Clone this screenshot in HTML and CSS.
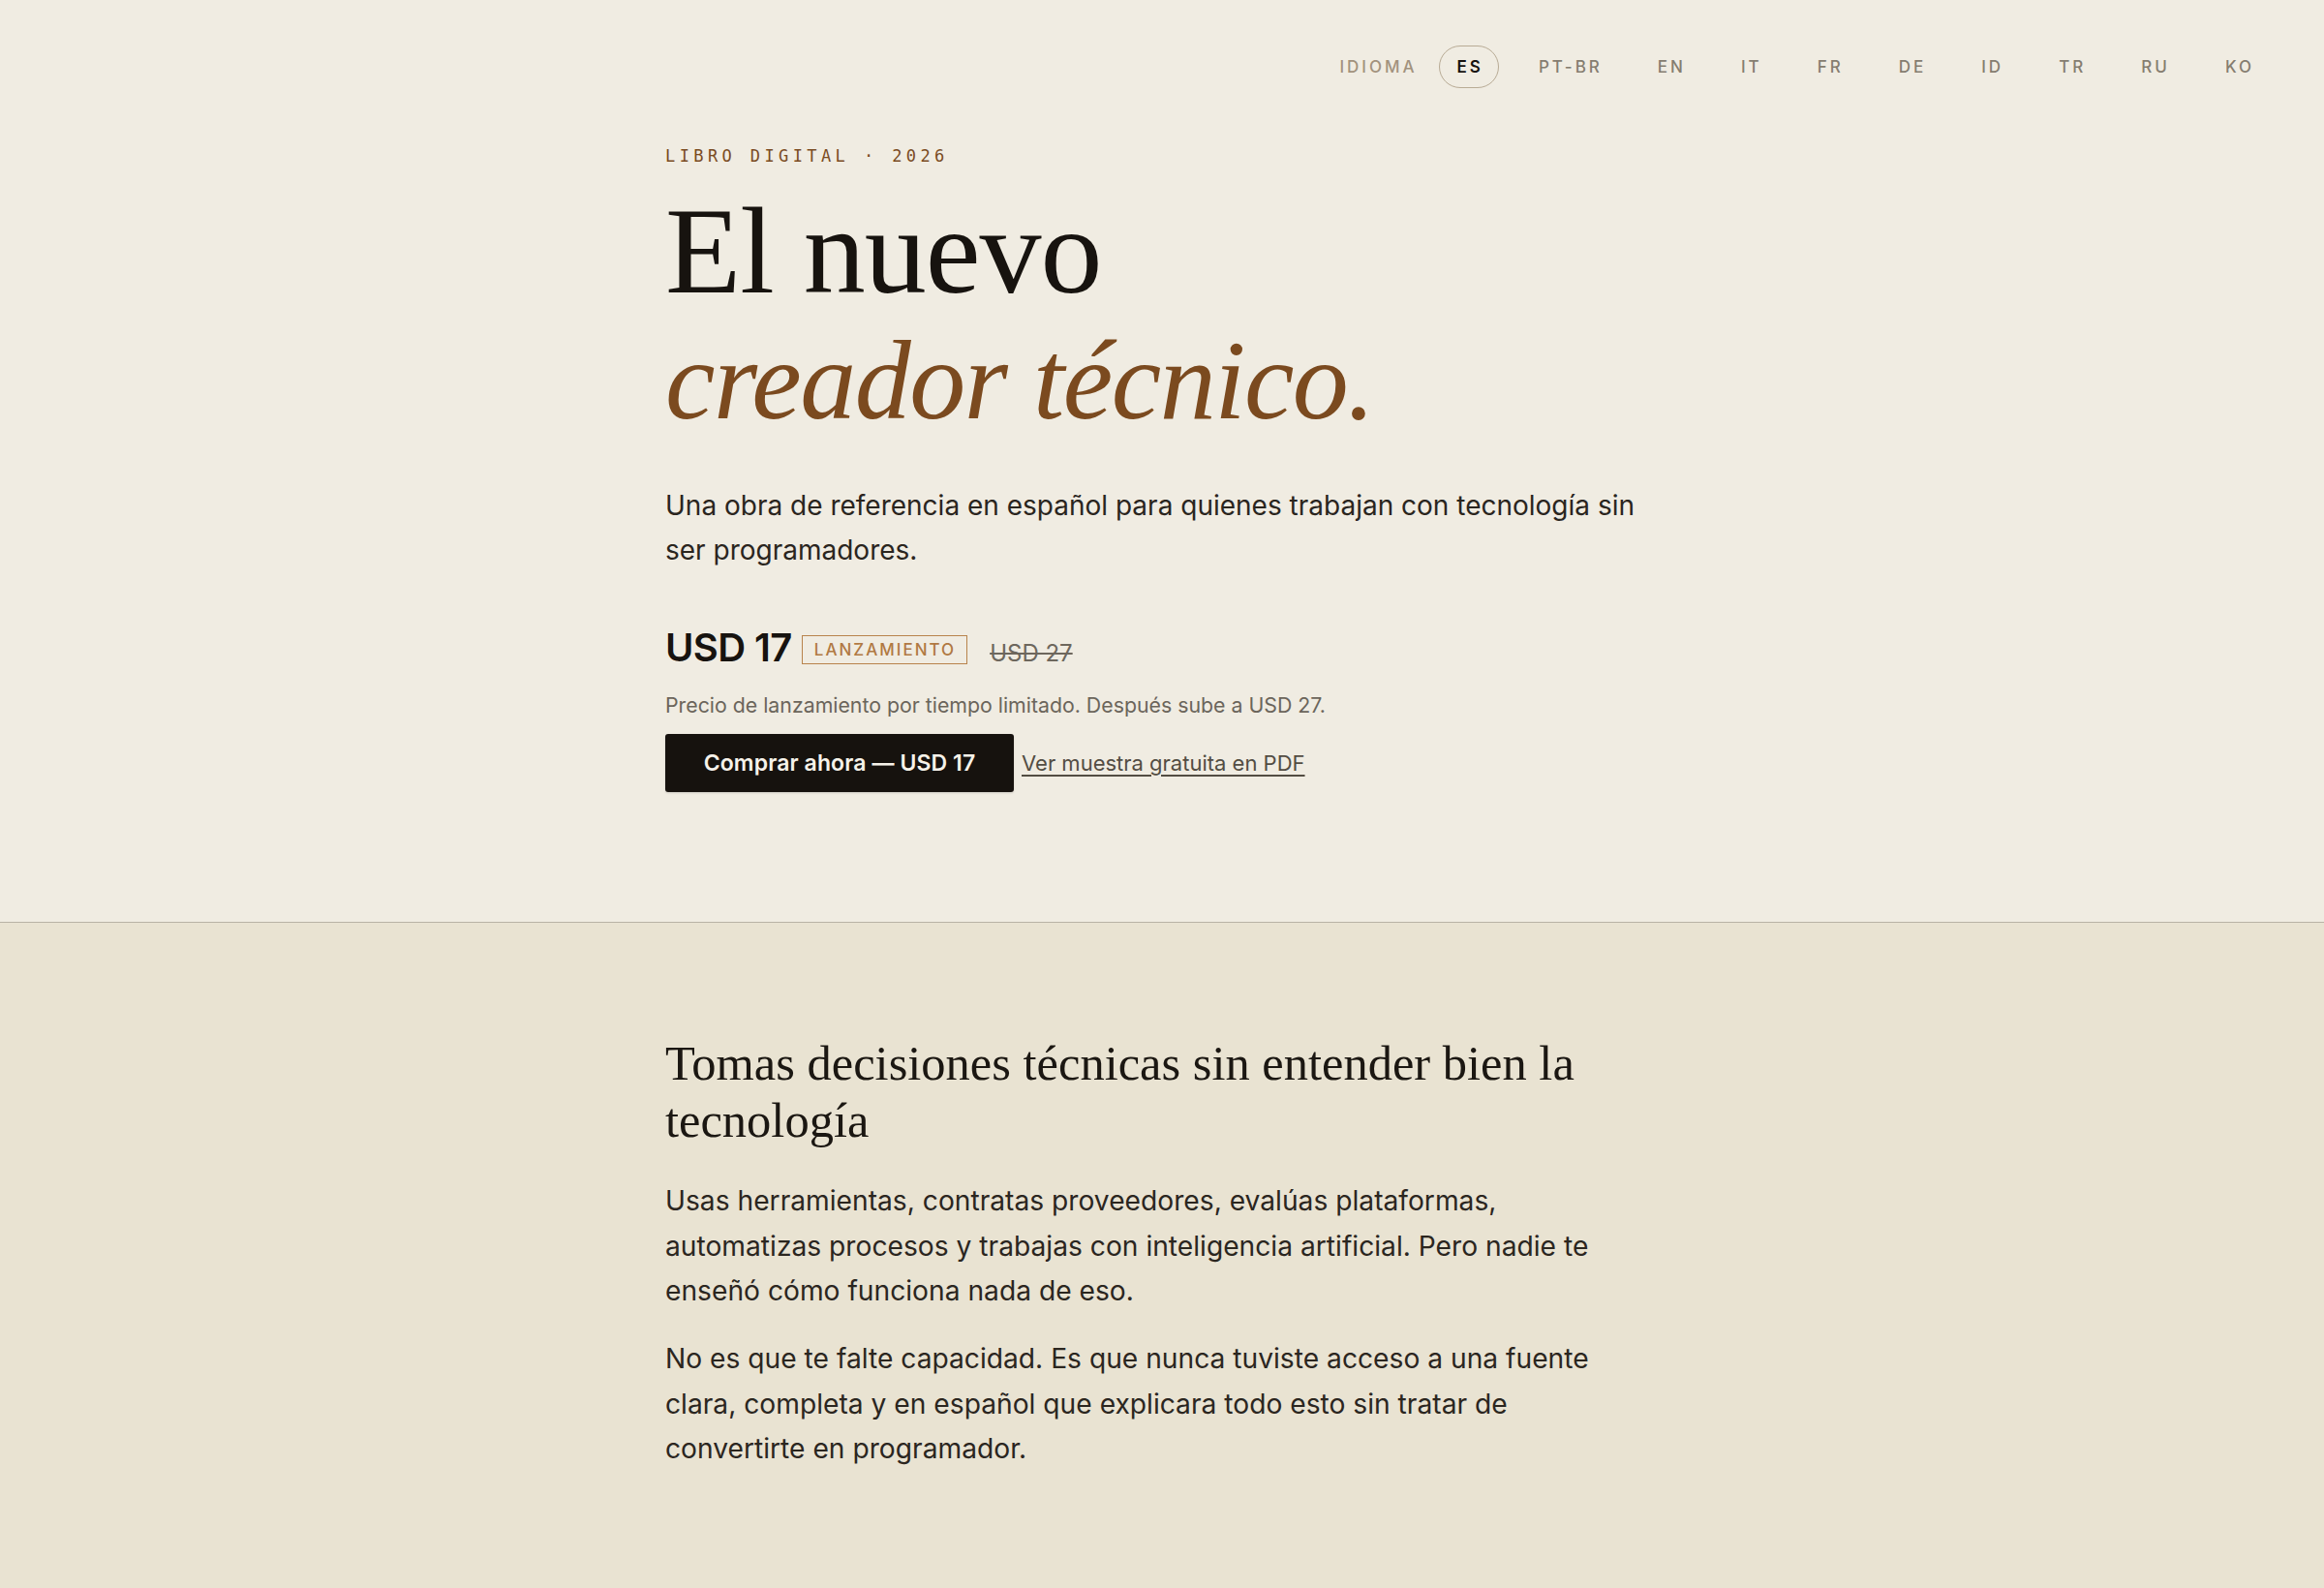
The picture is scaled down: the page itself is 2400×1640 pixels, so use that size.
FILE: index.html
```html
<!DOCTYPE html>
<html lang="es">
<head>
<meta charset="utf-8">
<title>El nuevo creador técnico</title>
<link rel="stylesheet" href="styles.css">
</head>
<body>
<header class="topbar">
  <nav class="lang-nav">
    <span class="lang-label">IDIOMA</span>
    <a class="lang lang-active" href="#">ES</a>
    <a class="lang" href="#">PT-BR</a>
    <a class="lang" href="#">EN</a>
    <a class="lang" href="#">IT</a>
    <a class="lang" href="#">FR</a>
    <a class="lang" href="#">DE</a>
    <a class="lang" href="#">ID</a>
    <a class="lang" href="#">TR</a>
    <a class="lang" href="#">RU</a>
    <a class="lang" href="#">KO</a>
  </nav>
</header>

<section class="hero">
  <div class="container">
    <p class="eyebrow">LIBRO DIGITAL · 2026</p>
    <h1 class="title">
      <span class="title-line">El nuevo</span>
      <span class="title-line title-italic">creador técnico.</span>
    </h1>
    <p class="lede">Una obra de referencia en español para quienes trabajan con tecnología sin ser programadores.</p>
    <div class="price-row">
      <span class="price">USD 17</span>
      <span class="badge">LANZAMIENTO</span>
      <span class="old-price">USD 27</span>
    </div>
    <p class="price-note">Precio de lanzamiento por tiempo limitado. Después sube a USD 27.</p>
    <div class="cta-row">
      <a class="btn-buy" href="#">Comprar ahora — USD 17</a>
      <a class="sample-link" href="#">Ver muestra gratuita en PDF</a>
    </div>
  </div>
</section>

<section class="problem">
  <div class="container">
    <h2 class="problem-title">Tomas decisiones técnicas sin entender bien la tecnología</h2>
    <p class="body-text">Usas herramientas, contratas proveedores, evalúas plataformas, automatizas procesos y trabajas con inteligencia artificial. Pero nadie te enseñó cómo funciona nada de eso.</p>
    <p class="body-text">No es que te falte capacidad. Es que nunca tuviste acceso a una fuente clara, completa y en español que explicara todo esto sin tratar de convertirte en programador.</p>
  </div>
</section>
</body>
</html>
```

FILE: styles.css
```css
* { box-sizing: border-box; }

html, body {
  margin: 0;
  padding: 0;
}

body {
  background: #f0ece2;
  color: #1a1611;
  font-family: Inter, "Noto Sans", "Liberation Sans", sans-serif;
}

a { text-decoration: none; color: inherit; }

/* ---------- top bar ---------- */
.topbar {
  display: flex;
  justify-content: flex-end;
  padding: 47px 56px 0;
}

.lang-nav {
  display: flex;
  align-items: center;
  gap: 22px;
  font-size: 17px;
  font-weight: 500;
  letter-spacing: 3px;
}

.lang-label {
  color: #a2927d;
}

.lang {
  display: inline-flex;
  align-items: center;
  justify-content: center;
  height: 44px;
  padding: 0 15px 0 18px;
  border: 1.5px solid transparent;
  border-radius: 22px;
  color: #857d70;
}

.lang-active {
  border-color: #b8ab95;
  color: #17130f;
  font-weight: 600;
}

/* ---------- containers ---------- */
.container {
  width: 1026px;
  margin: 0 auto;
}

/* ---------- hero ---------- */
.hero {
  padding: 58px 0 134px;
  border-bottom: 1px solid #b9b3a6;
}

.eyebrow {
  margin: 0;
  font-family: "DejaVu Sans Mono", "Liberation Mono", monospace;
  font-size: 17px;
  line-height: 24px;
  letter-spacing: 4.4px;
  color: #7a4b22;
}

.title {
  margin: 19px 0 0;
  font-family: "Liberation Serif", "Times New Roman", serif;
  font-weight: 400;
  color: #17130f;
}

.title-line {
  display: block;
  font-size: 128px;
  line-height: 134px;
  letter-spacing: -1px;
}

.title-italic {
  font-style: italic;
  font-size: 116px;
  letter-spacing: -1.5px;
  color: #7b4a1f;
}

.lede {
  margin: 39px 0 0;
  font-size: 28px;
  line-height: 46px;
  color: #2a251e;
}

.price-row {
  display: flex;
  align-items: baseline;
  gap: 10px;
  margin-top: 54px;
}

.price {
  font-size: 40px;
  line-height: 48px;
  font-weight: 600;
  letter-spacing: -0.6px;
  color: #17130f;
}

.badge {
  align-self: center;
  margin-top: 4px;
  display: inline-flex;
  align-items: center;
  height: 30px;
  padding: 0 11px 0 12px;
  border: 1.5px solid #b8834c;
  font-size: 17px;
  font-weight: 500;
  letter-spacing: 2px;
  color: #b07943;
}

.old-price {
  margin-left: 13px;
  font-size: 24px;
  line-height: 30px;
  color: #6d675d;
  text-decoration: line-through;
  text-decoration-thickness: 1.5px;
}

.price-note {
  margin: 19px 0 0;
  font-size: 21.3px;
  line-height: 33px;
  color: #6b655b;
}

.cta-row {
  display: flex;
  align-items: center;
  gap: 8px;
  margin-top: 13px;
}

.btn-buy {
  display: inline-flex;
  align-items: center;
  justify-content: center;
  width: 360px;
  height: 60px;
  background: #16120e;
  color: #f6f2ea;
  border-radius: 3px;
  font-size: 23px;
  font-weight: 600;
  letter-spacing: 0.1px;
  box-shadow: 0 1px 2px rgba(0,0,0,0.15);
}

.sample-link {
  font-size: 22px;
  color: #534d43;
  text-decoration: underline;
  text-decoration-thickness: 1.5px;
  text-underline-offset: 4px;
}

/* ---------- problem section ---------- */
.problem {
  background: #e9e3d2;
  padding: 116px 0 120px;
}

.problem-title {
  margin: 0;
  font-family: "Liberation Serif", "Times New Roman", serif;
  font-weight: 400;
  font-size: 50.5px;
  line-height: 59px;
  color: #1b1712;
}

.body-text {
  max-width: 1010px;
  margin: 30px 0 0;
  font-size: 28.2px;
  line-height: 46.5px;
  color: #2b261f;
}

.body-text + .body-text {
  margin-top: 23.5px;
}
```
